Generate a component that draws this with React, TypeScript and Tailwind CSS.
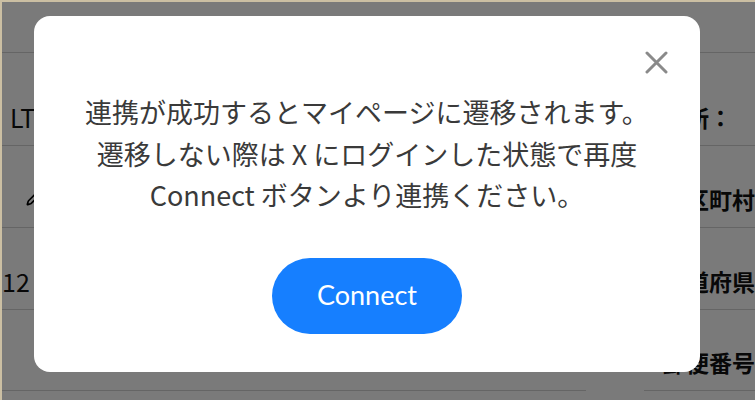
import { Pencil } from 'lucide-react';

const jp = "font-['Noto_Sans_CJK_JP','Noto_Sans',sans-serif]";

const rows = [
  { h: 'h-[93px]', left: 'LTD.', leftPad: 'pl-2', label: '住所：' },
  { h: 'h-[82px]', left: '', leftPad: 'pl-6', label: '市区町村', icon: true },
  { h: 'h-[82px]', left: '12', leftPad: 'pl-0', label: '都道府県' },
  { h: 'h-[81px]', left: '', leftPad: 'pl-2', label: '郵便番号' },
];

const App = () => {
  return (
    <div
      className={`relative h-[400px] w-[755px] overflow-hidden border-l-2 border-t-2 border-[#cbbfa3] bg-white ${jp}`}
    >
      {/* page underneath */}
      <div className="flex">
        <div className="flex w-[585px] flex-col">
          <div className="h-[51px] border-b border-[#d4d4d4]" />
          {rows.map((r, i) => (
            <div
              key={i}
              className={`flex items-end border-b border-[#d4d4d4] pb-[13px] ${r.h} ${r.leftPad}`}
            >
              {r.icon ? (
                <Pencil className="mb-[8px] h-4 w-4 text-black" strokeWidth={2.5} />
              ) : (
                <span className="text-[25px] leading-[30px] text-[#111]">
                  {r.left}
                </span>
              )}
            </div>
          ))}
        </div>
        <div className="ml-[58px] flex flex-1 flex-col">
          <div className="h-[51px] border-b border-[#d4d4d4]" />
          {rows.map((r, i) => (
            <div
              key={i}
              className={`flex items-end border-b border-[#d4d4d4] pb-[13px] pl-[19px] ${r.h}`}
            >
              <span className="whitespace-nowrap text-[23px] font-bold leading-[30px] text-[#111]">
                {r.label}
              </span>
            </div>
          ))}
        </div>
      </div>

      {/* overlay */}
      <div className="absolute inset-0 bg-black/[0.52]" />

      {/* modal */}
      <div className="absolute left-[32px] top-[14px] flex h-[356px] w-[666px] flex-col items-center rounded-[16px] bg-white pt-[75px]">
        <button className="absolute right-[32px] top-[35px] h-[23px] w-[23px]">
          <svg viewBox="0 0 23 23" className="h-[23px] w-[23px]">
            <path
              d="M2 2 L21 21 M21 2 L2 21"
              stroke="#8a8a8a"
              strokeWidth="3"
              strokeLinecap="round"
            />
          </svg>
        </button>
        <p className="text-center text-[27px] leading-[41.5px] text-[#3a3a3a]">
          連携が成功するとマイページに遷移されます。
          <br />
          遷移しない際は X にログインした状態で再度
          <br />
          Connect ボタンより連携ください。
        </p>
        <button className="mt-[42px] flex h-[76px] w-[190px] items-center justify-center rounded-full bg-[#167fff] font-['Lato','Noto_Sans',sans-serif] text-[27px] text-white">
          Connect
        </button>
      </div>
    </div>
  );
};

export default App;
